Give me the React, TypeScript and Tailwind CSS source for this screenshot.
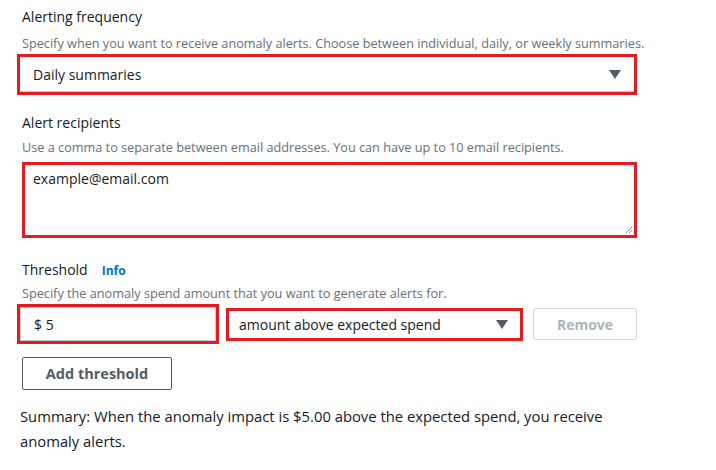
import React from "react";

const Caret = () => (
    <svg width="12" height="9" viewBox="0 0 12 9" className="shrink-0">
        <path d="M0 0 H12 L6 9 Z" fill="#545b64" />
    </svg>
);

const Label = ({ children }: { children: React.ReactNode }) => (
    <div className="text-[14px] leading-[20px] text-[#16191f]">{children}</div>
);

const Hint = ({ children }: { children: React.ReactNode }) => (
    <div className="text-[12.7px] leading-[16px] text-[#687078]">{children}</div>
);

export default function App() {
    return (
        <div className="w-[716px] h-[470px] bg-white overflow-hidden pl-[22px] pt-[7px] font-['Open_Sans',sans-serif]">
            {/* alerting frequency */}
            <Label>Alerting frequency</Label>
            <div className="mt-[8px]">
                <Hint>Specify when you want to receive anomaly alerts. Choose between individual, daily, or weekly summaries.</Hint>
            </div>
            <div className="mt-[3px] -ml-[5px] w-[620px] h-[41px] border-[3px] border-[#e31b23]">
                <div className="h-full flex items-center justify-between pl-[13px] pr-[13px] border-b border-[#c6cccf]">
                    <span className="text-[14px] text-[#16191f]">Daily summaries</span>
                    <Caret />
                </div>
            </div>

            {/* recipients */}
            <div className="mt-[18px]">
                <Label>Alert recipients</Label>
            </div>
            <div className="mt-[6px]">
                <Hint>Use a comma to separate between email addresses. You can have up to 10 email recipients.</Hint>
            </div>
            <div className="relative mt-[7px] w-[615px] h-[76px] border-[3px] border-[#e31b23]">
                <div className="pl-[8px] pt-[4px] text-[14px] leading-[20px] text-[#16191f]">example@email.com</div>
                <svg width="8" height="8" viewBox="0 0 8 8" className="absolute right-[1px] bottom-[1px]">
                    <path d="M1 7 L7 1 M4 7 L7 4" stroke="#879596" strokeWidth="1" />
                </svg>
            </div>

            {/* threshold */}
            <div className="mt-[22px] flex items-baseline gap-[14px]">
                <Label>Threshold</Label>
                <span className="text-[12px] font-bold text-[#0073bb]">Info</span>
            </div>
            <div className="mt-[5px]">
                <Hint>Specify the anomaly spend amount that you want to generate alerts for.</Hint>
            </div>
            <div className="mt-[3px] -ml-[5px] flex items-center">
                <div className="w-[202px] h-[40px] border-[3px] border-[#e31b23]">
                    <div className="h-full flex items-center pl-[13px] border border-[#c6cccf] text-[14px] text-[#16191f]">$ 5</div>
                </div>
                <div className="ml-[7px] w-[297px] h-[33px] border-[3px] border-[#e31b23] flex items-center justify-between pl-[10px] pr-[12px]">
                    <span className="text-[14px] text-[#16191f]">amount above expected spend</span>
                    <Caret />
                </div>
                <div className="ml-[10px] w-[104px] h-[32px] border border-[#d5dbdb] rounded-[2px] flex items-center justify-center text-[14px] font-bold text-[#aab7b8]">
                    Remove
                </div>
            </div>
            <div className="mt-[13px] w-[150px] h-[33px] border border-[#545b64] rounded-[2px] flex items-center justify-center text-[14.5px] font-bold text-[#545b64]">
                Add threshold
            </div>

            {/* summary */}
            <div className="mt-[14px] -ml-[2px] w-[660px] text-[14.8px] leading-[25px] text-[#16191f]">
                Summary: When the anomaly impact is $5.00 above the expected spend, you receive
                <br />
                anomaly alerts.
            </div>
        </div>
    );
}
